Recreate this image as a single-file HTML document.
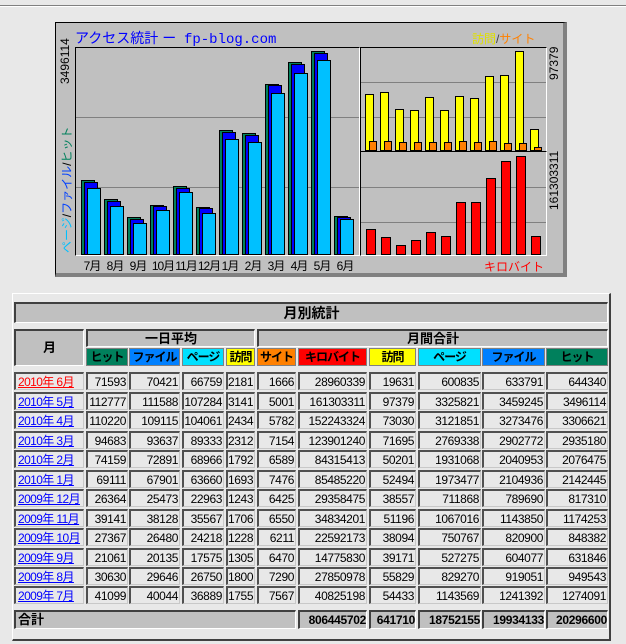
<!DOCTYPE html>
<html><head><meta charset="utf-8"><style>
body{margin:0;width:626px;height:644px;background:#e8e8e8;position:relative;overflow:hidden;font-family:"Liberation Sans","Noto Sans CJK JP",sans-serif;}
.a{position:absolute;}
.hr{left:0;top:5px;width:626px;height:0;border-top:1px solid #808080;border-bottom:1px solid #fff;}
.chart{left:55px;top:22px;width:507px;height:250px;background:#c0c0c0;border:1px solid #000;border-right:4px solid #808080;border-bottom:4px solid #808080;}
.fr{background:#c0c0c0;border-top:1px solid #000;border-left:1px solid #000;border-right:1px solid #fff;border-bottom:1px solid #fff;box-sizing:border-box;}
.g{height:1px;background:#808080;}
.b{border:1px solid #000;box-sizing:border-box;}
.ml{font-size:12px;color:#000;top:257px;width:24px;text-align:center;letter-spacing:-1px;white-space:nowrap;}
.up{transform-origin:0 0;transform:rotate(-90deg);white-space:nowrap;font-size:12px;}
.box{left:12px;top:293px;width:596px;height:345px;border:1px solid #fff;border-right:2px solid #404040;border-bottom:2px solid #404040;}
.h{background:#c0c0c0;border-top:2px solid #404040;border-left:2px solid #404040;border-bottom:1px solid #fff;border-right:1px solid #fff;box-sizing:border-box;font-weight:bold;font-size:13px;text-align:center;white-space:nowrap;}
.r{left:0;height:18px;width:626px;}
.r span{position:absolute;top:0;height:18px;box-sizing:border-box;border-top:2px solid #505050;border-left:2px solid #505050;border-bottom:1px solid #c8c8c8;border-right:1px solid #c8c8c8;font-size:12px;letter-spacing:-0.4px;text-align:right;padding-right:1px;line-height:16px;white-space:nowrap;overflow:hidden;}
.r span.c0{text-align:left;padding-left:2px;letter-spacing:-0.6px;}
.c0 u{color:#00f;}
.c0{left:14px;width:70px;}
.c1{left:86px;width:42px}.c2{left:129px;width:51px}.c3{left:182px;width:42px}.c4{left:226px;width:29px}
.c5{left:257px;width:39px}.c6{left:298px;width:69px}.c7{left:369px;width:47px}.c8{left:418px;width:63px}.c9{left:482px;width:63px}.c10{left:546px;width:62px}
.hc{position:absolute;top:348px;height:18px;box-sizing:border-box;border:1px solid #808080;font-size:12px;font-weight:bold;text-align:center;line-height:16px;white-space:nowrap;letter-spacing:-1px;overflow:hidden;}
.t{font-size:12px!important;text-align:right!important;line-height:16px;letter-spacing:-0.3px;}
</style></head><body>
<div class="a hr"></div>
<div class="a chart"></div>
<div class="a" style="left:75px;top:28px;font-size:14px;color:#0000ff;white-space:nowrap;">アクセス統計 ー&nbsp; <span style="font-family:'Liberation Mono',monospace;">fp-blog.com</span></div>
<div class="a" style="left:472px;top:30px;font-size:12px;white-space:nowrap;"><span style="color:#e0e000">訪問</span><span style="color:#404040">/</span><span style="color:#ff8000">サイト</span></div>
<div class="a" style="left:484px;top:258px;font-size:12px;color:#ff0000;">キロバイト</div>
<div class="a up" style="left:58px;top:84px;color:#000;">3496114</div>
<div class="a up" style="left:58px;top:253px;"><span style="color:#00c0ff">ページ</span><span style="color:#000">/</span><span style="color:#0040ff">ファイル</span><span style="color:#000">/</span><span style="color:#00805c">ヒット</span></div>
<div class="a up" style="left:547px;top:80px;color:#000;">97379</div>
<div class="a up" style="left:547px;top:210px;color:#000;">161303311</div>
<div class="a fr" style="left:75px;top:47px;width:285px;height:209px;"></div>
<div class="a g" style="left:76px;top:117px;width:283px"></div>
<div class="a g" style="left:76px;top:187px;width:283px"></div>
<div class="a fr" style="left:360px;top:47px;width:187px;height:105px;"></div>
<div class="a fr" style="left:360px;top:151px;width:187px;height:105px;"></div>
<div class="a g" style="left:361px;top:82px;width:185px"></div>
<div class="a g" style="left:361px;top:117px;width:185px"></div>
<div class="a g" style="left:361px;top:187px;width:185px"></div>
<div class="a g" style="left:361px;top:222px;width:185px"></div>
<div class="a b" style="left:81px;top:180px;width:14px;height:75px;background:#00805c"></div><div class="a b" style="left:84px;top:182px;width:14px;height:73px;background:#0000ff"></div><div class="a b" style="left:87px;top:188px;width:14px;height:67px;background:#00c0ff"></div>
<div class="a b" style="left:104px;top:199px;width:14px;height:56px;background:#00805c"></div><div class="a b" style="left:107px;top:201px;width:14px;height:54px;background:#0000ff"></div><div class="a b" style="left:110px;top:206px;width:14px;height:49px;background:#00c0ff"></div>
<div class="a b" style="left:127px;top:217px;width:14px;height:38px;background:#00805c"></div><div class="a b" style="left:130px;top:219px;width:14px;height:36px;background:#0000ff"></div><div class="a b" style="left:133px;top:223px;width:14px;height:32px;background:#00c0ff"></div>
<div class="a b" style="left:150px;top:205px;width:14px;height:50px;background:#00805c"></div><div class="a b" style="left:153px;top:206px;width:14px;height:49px;background:#0000ff"></div><div class="a b" style="left:156px;top:210px;width:14px;height:45px;background:#00c0ff"></div>
<div class="a b" style="left:173px;top:186px;width:14px;height:69px;background:#00805c"></div><div class="a b" style="left:176px;top:188px;width:14px;height:67px;background:#0000ff"></div><div class="a b" style="left:179px;top:192px;width:14px;height:63px;background:#00c0ff"></div>
<div class="a b" style="left:196px;top:207px;width:14px;height:48px;background:#00805c"></div><div class="a b" style="left:199px;top:208px;width:14px;height:47px;background:#0000ff"></div><div class="a b" style="left:202px;top:213px;width:14px;height:42px;background:#00c0ff"></div>
<div class="a b" style="left:219px;top:130px;width:14px;height:125px;background:#00805c"></div><div class="a b" style="left:222px;top:132px;width:14px;height:123px;background:#0000ff"></div><div class="a b" style="left:225px;top:139px;width:14px;height:116px;background:#00c0ff"></div>
<div class="a b" style="left:242px;top:133px;width:14px;height:122px;background:#00805c"></div><div class="a b" style="left:245px;top:135px;width:14px;height:120px;background:#0000ff"></div><div class="a b" style="left:248px;top:142px;width:14px;height:113px;background:#00c0ff"></div>
<div class="a b" style="left:265px;top:84px;width:14px;height:171px;background:#00805c"></div><div class="a b" style="left:268px;top:85px;width:14px;height:170px;background:#0000ff"></div><div class="a b" style="left:271px;top:93px;width:14px;height:162px;background:#00c0ff"></div>
<div class="a b" style="left:288px;top:62px;width:14px;height:193px;background:#00805c"></div><div class="a b" style="left:291px;top:64px;width:14px;height:191px;background:#0000ff"></div><div class="a b" style="left:294px;top:73px;width:14px;height:182px;background:#00c0ff"></div>
<div class="a b" style="left:311px;top:51px;width:14px;height:204px;background:#00805c"></div><div class="a b" style="left:314px;top:53px;width:14px;height:202px;background:#0000ff"></div><div class="a b" style="left:317px;top:60px;width:14px;height:195px;background:#00c0ff"></div>
<div class="a b" style="left:334px;top:216px;width:14px;height:39px;background:#00805c"></div><div class="a b" style="left:337px;top:217px;width:14px;height:38px;background:#0000ff"></div><div class="a b" style="left:340px;top:219px;width:14px;height:36px;background:#00c0ff"></div>
<div class="a ml" style="left:80px">7月</div><div class="a ml" style="left:103px">8月</div><div class="a ml" style="left:126px">9月</div><div class="a ml" style="left:151px">10月</div><div class="a ml" style="left:174px">11月</div><div class="a ml" style="left:197px">12月</div><div class="a ml" style="left:218px">1月</div><div class="a ml" style="left:241px">2月</div><div class="a ml" style="left:264px">3月</div><div class="a ml" style="left:287px">4月</div><div class="a ml" style="left:310px">5月</div><div class="a ml" style="left:333px">6月</div>
<div class="a b" style="left:365px;top:94px;width:9px;height:57px;background:#ff0"></div><div class="a b" style="left:369px;top:141px;width:8px;height:10px;background:#ff8000"></div>
<div class="a b" style="left:380px;top:92px;width:9px;height:59px;background:#ff0"></div><div class="a b" style="left:384px;top:141px;width:8px;height:10px;background:#ff8000"></div>
<div class="a b" style="left:395px;top:109px;width:9px;height:42px;background:#ff0"></div><div class="a b" style="left:399px;top:142px;width:8px;height:9px;background:#ff8000"></div>
<div class="a b" style="left:410px;top:110px;width:9px;height:41px;background:#ff0"></div><div class="a b" style="left:414px;top:142px;width:8px;height:9px;background:#ff8000"></div>
<div class="a b" style="left:425px;top:97px;width:9px;height:54px;background:#ff0"></div><div class="a b" style="left:429px;top:142px;width:8px;height:9px;background:#ff8000"></div>
<div class="a b" style="left:440px;top:110px;width:9px;height:41px;background:#ff0"></div><div class="a b" style="left:444px;top:142px;width:8px;height:9px;background:#ff8000"></div>
<div class="a b" style="left:455px;top:96px;width:9px;height:55px;background:#ff0"></div><div class="a b" style="left:459px;top:141px;width:8px;height:10px;background:#ff8000"></div>
<div class="a b" style="left:470px;top:98px;width:9px;height:53px;background:#ff0"></div><div class="a b" style="left:474px;top:142px;width:8px;height:9px;background:#ff8000"></div>
<div class="a b" style="left:485px;top:76px;width:9px;height:75px;background:#ff0"></div><div class="a b" style="left:489px;top:141px;width:8px;height:10px;background:#ff8000"></div>
<div class="a b" style="left:500px;top:75px;width:9px;height:76px;background:#ff0"></div><div class="a b" style="left:504px;top:143px;width:8px;height:8px;background:#ff8000"></div>
<div class="a b" style="left:515px;top:51px;width:9px;height:100px;background:#ff0"></div><div class="a b" style="left:519px;top:143px;width:8px;height:8px;background:#ff8000"></div>
<div class="a b" style="left:530px;top:129px;width:9px;height:22px;background:#ff0"></div><div class="a b" style="left:534px;top:147px;width:8px;height:4px;background:#ff8000"></div>
<div class="a b" style="left:366px;top:229px;width:10px;height:26px;background:#f00"></div>
<div class="a b" style="left:381px;top:237px;width:10px;height:18px;background:#f00"></div>
<div class="a b" style="left:396px;top:245px;width:10px;height:10px;background:#f00"></div>
<div class="a b" style="left:411px;top:240px;width:10px;height:15px;background:#f00"></div>
<div class="a b" style="left:426px;top:232px;width:10px;height:23px;background:#f00"></div>
<div class="a b" style="left:441px;top:236px;width:10px;height:19px;background:#f00"></div>
<div class="a b" style="left:456px;top:202px;width:10px;height:53px;background:#f00"></div>
<div class="a b" style="left:471px;top:202px;width:10px;height:53px;background:#f00"></div>
<div class="a b" style="left:486px;top:178px;width:10px;height:77px;background:#f00"></div>
<div class="a b" style="left:501px;top:161px;width:10px;height:94px;background:#f00"></div>
<div class="a b" style="left:516px;top:156px;width:10px;height:99px;background:#f00"></div>
<div class="a b" style="left:531px;top:236px;width:10px;height:19px;background:#f00"></div>

<div class="a box"></div>
<div class="a h" style="left:14px;top:302px;width:594px;height:21px;font-size:14px;line-height:18px;">月別統計</div>
<div class="a h" style="left:14px;top:329px;width:70px;height:37px;line-height:33px;">月</div>
<div class="a h" style="left:86px;top:329px;width:169px;height:18px;line-height:15px;">一日平均</div>
<div class="a h" style="left:257px;top:329px;width:351px;height:18px;line-height:15px;">月間合計</div>
<div class="hc c1" style="background:#00805c">ヒット</div>
<div class="hc c2" style="background:#0080ff">ファイル</div>
<div class="hc c3" style="background:#00e0ff">ページ</div>
<div class="hc c4" style="background:#ffff00">訪問</div>
<div class="hc c5" style="background:#ff8000">サイト</div>
<div class="hc c6" style="background:#ff0000">キロバイト</div>
<div class="hc c7" style="background:#ffff00">訪問</div>
<div class="hc c8" style="background:#00e0ff">ページ</div>
<div class="hc c9" style="background:#0080ff">ファイル</div>
<div class="hc c10" style="background:#00805c">ヒット</div>

<div class="a r" style="top:372px"><span class="c0"><u style="color:#f00">2010年 6月</u></span><span class="c1">71593</span><span class="c2">70421</span><span class="c3">66759</span><span class="c4">2181</span><span class="c5">1666</span><span class="c6">28960339</span><span class="c7">19631</span><span class="c8">600835</span><span class="c9">633791</span><span class="c10">644340</span></div>
<div class="a r" style="top:391.5px"><span class="c0"><u>2010年 5月</u></span><span class="c1">112777</span><span class="c2">111588</span><span class="c3">107284</span><span class="c4">3141</span><span class="c5">5001</span><span class="c6">161303311</span><span class="c7">97379</span><span class="c8">3325821</span><span class="c9">3459245</span><span class="c10">3496114</span></div>
<div class="a r" style="top:411px"><span class="c0"><u>2010年 4月</u></span><span class="c1">110220</span><span class="c2">109115</span><span class="c3">104061</span><span class="c4">2434</span><span class="c5">5782</span><span class="c6">152243324</span><span class="c7">73030</span><span class="c8">3121851</span><span class="c9">3273476</span><span class="c10">3306621</span></div>
<div class="a r" style="top:430.5px"><span class="c0"><u>2010年 3月</u></span><span class="c1">94683</span><span class="c2">93637</span><span class="c3">89333</span><span class="c4">2312</span><span class="c5">7154</span><span class="c6">123901240</span><span class="c7">71695</span><span class="c8">2769338</span><span class="c9">2902772</span><span class="c10">2935180</span></div>
<div class="a r" style="top:450px"><span class="c0"><u>2010年 2月</u></span><span class="c1">74159</span><span class="c2">72891</span><span class="c3">68966</span><span class="c4">1792</span><span class="c5">6589</span><span class="c6">84315413</span><span class="c7">50201</span><span class="c8">1931068</span><span class="c9">2040953</span><span class="c10">2076475</span></div>
<div class="a r" style="top:469.5px"><span class="c0"><u>2010年 1月</u></span><span class="c1">69111</span><span class="c2">67901</span><span class="c3">63660</span><span class="c4">1693</span><span class="c5">7476</span><span class="c6">85485220</span><span class="c7">52494</span><span class="c8">1973477</span><span class="c9">2104936</span><span class="c10">2142445</span></div>
<div class="a r" style="top:489px"><span class="c0"><u>2009年 12月</u></span><span class="c1">26364</span><span class="c2">25473</span><span class="c3">22963</span><span class="c4">1243</span><span class="c5">6425</span><span class="c6">29358475</span><span class="c7">38557</span><span class="c8">711868</span><span class="c9">789690</span><span class="c10">817310</span></div>
<div class="a r" style="top:508.5px"><span class="c0"><u>2009年 11月</u></span><span class="c1">39141</span><span class="c2">38128</span><span class="c3">35567</span><span class="c4">1706</span><span class="c5">6550</span><span class="c6">34834201</span><span class="c7">51196</span><span class="c8">1067016</span><span class="c9">1143850</span><span class="c10">1174253</span></div>
<div class="a r" style="top:528px"><span class="c0"><u>2009年 10月</u></span><span class="c1">27367</span><span class="c2">26480</span><span class="c3">24218</span><span class="c4">1228</span><span class="c5">6211</span><span class="c6">22592173</span><span class="c7">38094</span><span class="c8">750767</span><span class="c9">820900</span><span class="c10">848382</span></div>
<div class="a r" style="top:547.5px"><span class="c0"><u>2009年 9月</u></span><span class="c1">21061</span><span class="c2">20135</span><span class="c3">17575</span><span class="c4">1305</span><span class="c5">6470</span><span class="c6">14775830</span><span class="c7">39171</span><span class="c8">527275</span><span class="c9">604077</span><span class="c10">631846</span></div>
<div class="a r" style="top:567px"><span class="c0"><u>2009年 8月</u></span><span class="c1">30630</span><span class="c2">29646</span><span class="c3">26750</span><span class="c4">1800</span><span class="c5">7290</span><span class="c6">27850978</span><span class="c7">55829</span><span class="c8">829270</span><span class="c9">919051</span><span class="c10">949543</span></div>
<div class="a r" style="top:586px"><span class="c0"><u>2009年 7月</u></span><span class="c1">41099</span><span class="c2">40044</span><span class="c3">36889</span><span class="c4">1755</span><span class="c5">7567</span><span class="c6">40825198</span><span class="c7">54433</span><span class="c8">1143569</span><span class="c9">1241392</span><span class="c10">1274091</span></div>

<div class="a h" style="left:14px;top:610px;width:282px;height:19px;text-align:left;padding-left:2px;line-height:16px;">合計</div>
<div class="a h t" style="left:298px;top:610px;width:69px;height:19px;">806445702</div>
<div class="a h t" style="left:369px;top:610px;width:47px;height:19px;">641710</div>
<div class="a h t" style="left:418px;top:610px;width:63px;height:19px;">18752155</div>
<div class="a h t" style="left:482px;top:610px;width:63px;height:19px;">19934133</div>
<div class="a h t" style="left:546px;top:610px;width:62px;height:19px;">20296600</div>
</body></html>
